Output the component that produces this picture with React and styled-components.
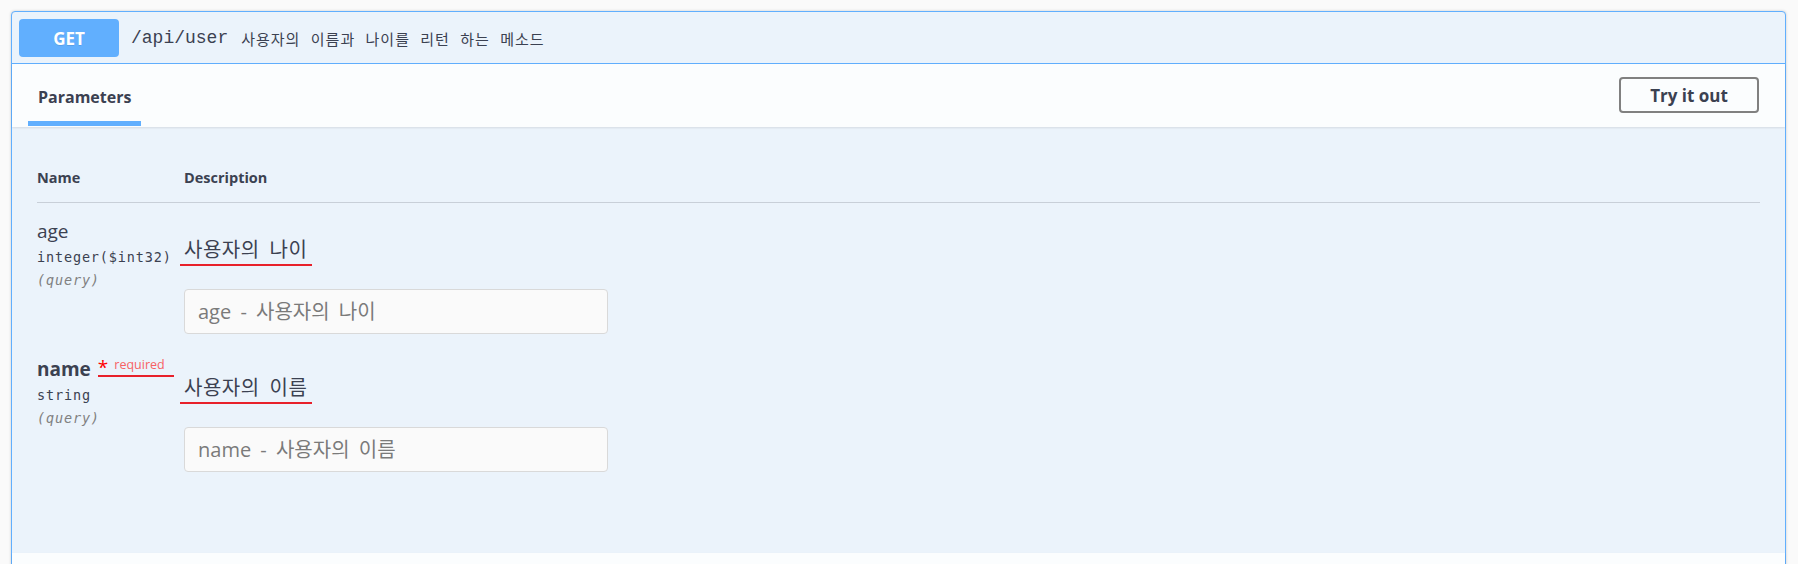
import React from "react";
import styled, { createGlobalStyle } from "styled-components";

const GlobalStyle = createGlobalStyle`
  html, body {
    margin: 0;
    overflow: hidden;
  }
  body {
    background: #fafafa;
    color: #3b4151;
    font-family: "Open Sans", "Noto Sans CJK KR", sans-serif;
  }
`;

const params = [
  {
    name: "age",
    type: "integer($int32)",
    location: "(query)",
    description: "사용자의 나이",
    required: false,
  },
  {
    name: "name",
    type: "string",
    location: "(query)",
    description: "사용자의 이름",
    required: true,
  },
];

const App = () => {
  return (
    <Wrapper>
      <GlobalStyle />
      <Opblock>
        <Summary>
          <Method>GET</Method>
          <Path>/api/user</Path>
          <SummaryDesc>사용자의 이름과 나이를 리턴 하는 메소드</SummaryDesc>
        </Summary>

        <SectionHeader>
          <Tab>Parameters</Tab>
          <TryButton>Try it out</TryButton>
        </SectionHeader>

        <ParamsBody>
          <TableHead>
            <div>Name</div>
            <div>Description</div>
          </TableHead>
          {params.map(p => (
            <ParamRow key={p.name}>
              <div>
                <NameLine>
                  <ParamName bold={p.required}>{p.name}</ParamName>
                  {p.required && (
                    <Required>
                      <Star>*</Star>
                      <ReqText>required</ReqText>
                    </Required>
                  )}
                </NameLine>
                <TypeLine first>{p.type}</TypeLine>
                <TypeLine muted>{p.location}</TypeLine>
              </div>
              <DescCell>
                <DescText>{p.description}</DescText>
                <ParamInput placeholder={`${p.name} - ${p.description}`} />
              </DescCell>
            </ParamRow>
          ))}
        </ParamsBody>

        {/* responses section starts right at the bottom edge */}
        <ResponsesHeader />
      </Opblock>
    </Wrapper>
  );
};
export default App;

const Wrapper = styled.div`
  padding: 11px 12px 0 11px;
`;

const Opblock = styled.div`
  border: 1px solid #61affe;
  border-radius: 4px;
  background: #ebf3fb;
  box-shadow: 0 0 3px rgba(0, 0, 0, 0.19);
`;

const Summary = styled.div`
  display: flex;
  align-items: center;
  padding: 7px 0 6px 7px;
  border-bottom: 1px solid #61affe;
`;

const Method = styled.div`
  width: 100px;
  height: 38px;
  display: flex;
  align-items: center;
  justify-content: center;
  background: #61affe;
  border-radius: 4px;
  color: #fff;
  font-size: 17px;
  font-weight: 700;
  text-shadow: 0 1px 0 rgba(0, 0, 0, 0.1);
`;

const Path = styled.span`
  margin-left: 12px;
  font-family: "Liberation Mono", "DejaVu Sans Mono", monospace;
  font-size: 18px;
  color: #3b4151;
`;

const SummaryDesc = styled.span`
  margin-left: 13px;
  font-family: "Noto Sans CJK KR", sans-serif;
  font-size: 15px;
  letter-spacing: 1px;
  word-spacing: 6px;
  color: #3b4151;
`;

const SectionHeader = styled.div`
  display: flex;
  justify-content: space-between;
  height: 63px;
  box-sizing: border-box;
  padding: 0 26px 1px 16px;
  background: rgba(255, 255, 255, 0.8);
  box-shadow: 0 1px 2px rgba(0, 0, 0, 0.1);
  position: relative;
`;

const Tab = styled.div`
  display: flex;
  align-items: center;
  padding: 8px 10px 0;
  border-bottom: 5px solid #61affe;
  font-size: 16px;
  font-weight: 700;
`;

const TryButton = styled.button`
  align-self: center;
  width: 140px;
  height: 36px;
  border: 2px solid #808080;
  border-radius: 4px;
  background: transparent;
  color: #3b4151;
  font-family: "Open Sans", sans-serif;
  font-size: 17px;
  font-weight: 700;
  padding: 0;
`;

const ParamsBody = styled.div`
  padding: 42px 25px 74px;
`;

const TableHead = styled.div`
  display: grid;
  grid-template-columns: 147px 1fr;
  padding-bottom: 15px;
  border-bottom: 1px solid rgba(59, 65, 81, 0.2);
  font-size: 14.5px;
  font-weight: 700;
  line-height: 18px;
`;

const ParamRow = styled.div`
  display: grid;
  grid-template-columns: 147px 1fr;
  padding: 17px 0 7px;
`;

const NameLine = styled.div`
  display: flex;
  align-items: flex-end;
  line-height: 22px;
`;

const ParamName = styled.span`
  font-size: 19px;
  font-weight: ${p => (p.bold ? 700 : 400)};
`;

const Required = styled.span`
  display: inline-flex;
  align-items: flex-end;
  margin: 0 0 3px 7px;
  padding-right: 9px;
  border-bottom: 2px solid #e8202a;
`;

const Star = styled.span`
  color: #ff0000;
  font-size: 19px;
  line-height: 16px;
`;

const ReqText = styled.span`
  color: #f76164;
  font-size: 12.5px;
  line-height: 13px;
  padding: 0 0 4px 6px;
`;

const TypeLine = styled.div`
  margin-top: ${p => (p.first ? "4px" : "0")};
  font-family: "DejaVu Sans Mono", monospace;
  font-size: 13.5px;
  letter-spacing: 0.85px;
  line-height: 23px;
  font-style: ${p => (p.muted ? "italic" : "normal")};
  color: ${p => (p.muted ? "#808080" : "#3b4151")};
`;

const DescCell = styled.div`
  padding-top: 13px;
`;

const DescText = styled.div`
  display: inline-block;
  margin-left: -4px;
  padding: 0 5px 0 4px;
  font-family: "Noto Sans CJK KR", sans-serif;
  font-size: 20px;
  letter-spacing: 0.5px;
  word-spacing: 5px;
  line-height: 31px;
  border-bottom: 2px solid #e8202a;
`;

const ParamInput = styled.input`
  display: block;
  box-sizing: border-box;
  margin-top: 23px;
  width: 424px;
  height: 45px;
  padding: 0 13px;
  border: 1px solid #d9d9d9;
  border-radius: 4px;
  background: #fafafa;
  font-family: "Open Sans", "Noto Sans CJK KR", sans-serif;
  font-size: 20px;
  word-spacing: 4px;
  color: #3b4151;
  outline: none;

  &::placeholder {
    color: #7a7a7a;
  }
`;

const ResponsesHeader = styled.div`
  height: 50px;
  background: rgba(255, 255, 255, 0.8);
  box-shadow: 0 1px 2px rgba(0, 0, 0, 0.1);
`;
